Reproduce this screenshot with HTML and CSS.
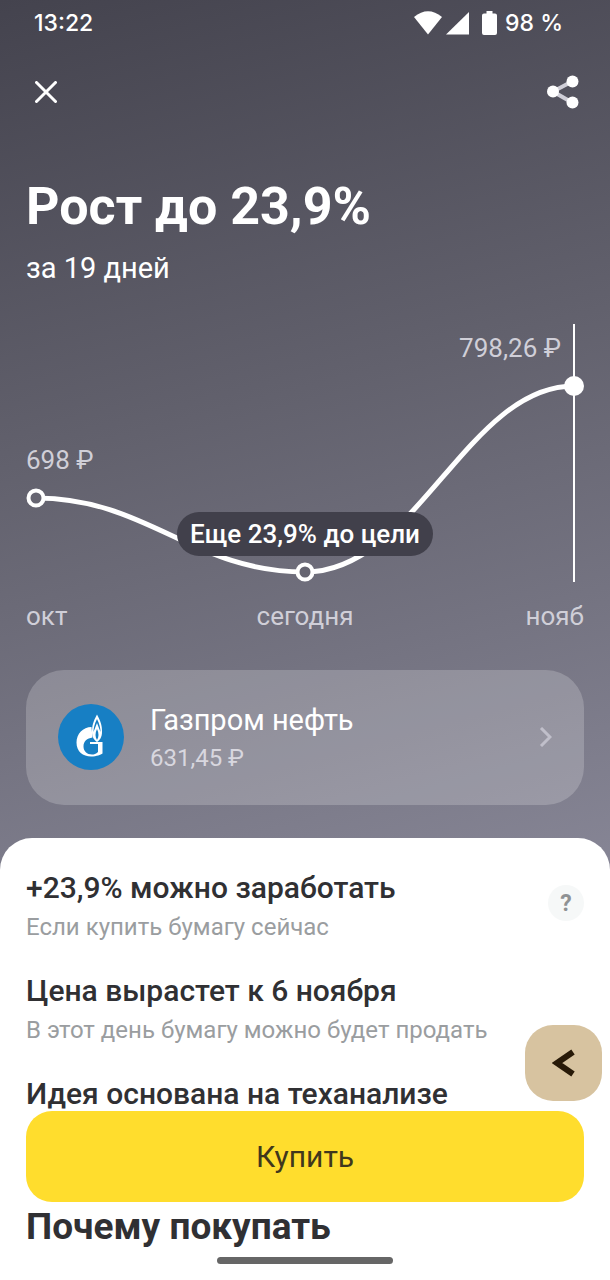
FILE: index.html
```html
<!DOCTYPE html>
<html lang="ru">
<head>
<meta charset="utf-8">
<meta name="viewport" content="width=device-width, initial-scale=1">
<title>Газпром нефть — рост до 23,9%</title>
<link rel="stylesheet" href="styles.css">
</head>
<body>
<main class="page">
  <section class="hero">
    <div class="status">
      <time class="status-time">13:22</time>
      <div class="status-right">
        <svg width="28" height="24" viewBox="0 0 28 24" fill="#fff" aria-hidden="true"><path d="M0 6Q14-5.500 28 6L14 23.500Z"/></svg>
        <svg width="24" height="24" viewBox="0 0 24 24" fill="#fff" aria-hidden="true"><path d="M0 23.500H23V1Z"/></svg>
        <svg class="battery" width="15" height="24" viewBox="0 0 15 24" fill="#fff" aria-hidden="true"><path d="M4.500 0h6v2.500H13q2 0 2 2V22q0 2-2 2H2q-2 0-2-2V4.500q0-2 2-2h2.500Z"/></svg>
        <span>98 %</span>
      </div>
    </div>

    <nav class="toolbar">
      <button class="icon-button" type="button" aria-label="Закрыть">
        <svg width="22" height="22" viewBox="0 0 22 22" fill="none" stroke="#fff" stroke-width="3" stroke-linecap="round" aria-hidden="true"><path d="M1.500 1.500l19 19M20.500 1.500l-19 19"/></svg>
      </button>
      <button class="icon-button" type="button" aria-label="Поделиться">
        <svg width="32" height="34" viewBox="0 0 32 34" fill="#fff" aria-hidden="true"><path d="M25 6.500L6 16.500l19 11" fill="none" stroke="#d0cfd8" stroke-width="4"/><circle cx="25.500" cy="6.500" r="6"/><circle cx="6" cy="16.500" r="6"/><circle cx="25.500" cy="27.500" r="6"/></svg>
      </button>
    </nav>

    <h1 class="title">Рост до 23,9%</h1>
    <p class="period">за 19 дней</p>

    <div class="chart">
      <svg class="plot" viewBox="0 0 558 258" role="img" aria-label="Прогноз цены">
        <path class="marker-line" d="M548 0V258"/>
        <path class="curve" d="M10 174C122 174 167 248 279 248C390 248 441 62 548 62"/>
        <circle class="point" cx="10" cy="174" r="7.500"/>
        <circle class="point" cx="279" cy="248" r="7.500"/>
        <circle class="point-end" cx="548" cy="62" r="10"/>
        <text class="price" x="0" y="145">698 ₽</text>
        <text class="price" x="535" y="33" text-anchor="end">798,26 ₽</text>
        <rect class="bubble" x="151" y="188" width="256" height="44" rx="22"/>
        <text class="bubble-text" x="279" y="219" text-anchor="middle">Еще 23,9% до цели</text>
      </svg>
      <div class="axis"><span>окт</span><span>сегодня</span><span>нояб</span></div>
    </div>

    <a class="stock" href="#stock">
      <svg class="logo" width="66" height="66" viewBox="0 0 66 66" aria-hidden="true">
        <circle cx="33" cy="33" r="33" fill="#177fc4"/>
        <path d="M33.500 23C25 23 18.500 30 18.500 38.500C18.500 47.500 25 52.500 33 52.500C39 52.500 42.500 50.500 44.500 49.500V38H32V40H40V48C38 50 36 50.500 34 50.500C29 50.500 25.500 47 25.500 42.500C25.500 37 29 34.500 34.500 33.500Z" fill="#fff"/>
        <path d="M39 10.500C35 18 34 22 34 28C34 33 36 36 39 38C42 36 44 33 44 28C44 22 43 18 39 10.500Z" fill="#fff"/>
        <path d="M39 15C36.500 20 35.500 24 35.500 28C36.500 25 38 22 39 19C40 22 41.500 25 42.500 28C42.500 24 41.500 20 39 15ZM39 25C37 29 37 33 39 36C41 33 41 29 39 25Z" fill="#177fc4"/>
      </svg>
      <span class="stock-text"><span class="stock-name">Газпром нефть</span><span class="stock-price">631,45 ₽</span></span>
      <svg width="13" height="20" viewBox="0 0 13 20" fill="none" stroke="#c0bfca" stroke-width="3" aria-hidden="true"><path d="M2 1l9 9-9 9"/></svg>
    </a>
  </section>

  <section class="sheet">
    <div class="fact">
      <div>
        <h2 class="fact-title">+23,9% можно заработать</h2>
        <p class="fact-note">Если купить бумагу сейчас</p>
      </div>
      <button class="help" type="button" aria-label="Подсказка">?</button>
    </div>
    <div class="fact">
      <div>
        <h2 class="fact-title">Цена вырастет к 6 ноября</h2>
        <p class="fact-note">В этот день бумагу можно будет продать</p>
      </div>
    </div>
    <div class="fact fact-last">
      <h2 class="fact-title">Идея основана на теханализе</h2>
    </div>
    <h2 class="reason">Почему покупать</h2>
  </section>
</main>

<button class="buy" type="button">Купить</button>
<button class="assist" type="button" aria-label="Открыть панель">
  <svg width="23" height="28" viewBox="0 0 23 28" fill="none" stroke="#281a08" stroke-width="6" aria-hidden="true"><path d="M21 3L5 14l16 11"/></svg>
</button>
<div class="home-bar"></div>
</body>
</html>
```
FILE: styles.css
```css
* {
  box-sizing: border-box;
}

body {
  margin: 0;
  background: #fff;
  color: #303033;
  font-family: Roboto, "Noto Sans", sans-serif;
}

h1,
h2,
p {
  margin: 0;
}

button {
  border: 0;
  padding: 0;
  font-family: inherit;
  cursor: pointer;
}

svg {
  display: block;
}

.hero {
  padding: 0 26px 75px;
  background: linear-gradient(165deg, #44434e 0%, #62616d 45%, #878696 100%);
  color: #fff;
}

.status {
  display: flex;
  align-items: center;
  justify-content: space-between;
  height: 46px;
  padding: 0 21px 0 8px;
  font-family: Inter, sans-serif;
  font-size: 23px;
  font-weight: 500;
}

.status-right {
  display: flex;
  align-items: center;
  gap: 4px;
}

.battery {
  margin: 0 4px 0 8px;
}

.toolbar {
  display: flex;
  align-items: center;
  justify-content: space-between;
  height: 92px;
  padding: 0 5px 0 9px;
}

.icon-button {
  background: none;
}

.title {
  margin-top: 39px;
  font-size: 52px;
  font-weight: 700;
  line-height: 60px;
}

.period {
  margin-top: 13px;
  font-size: 29px;
  line-height: 36px;
}

.chart {
  margin-top: 38px;
}

.plot {
  width: 100%;
  height: auto;
  overflow: visible;
}

.marker-line {
  stroke: #fff;
  stroke-width: 2;
}

.curve {
  fill: none;
  stroke: #fff;
  stroke-width: 5;
}

.point {
  fill: #666571;
  stroke: #fff;
  stroke-width: 4;
}

.point-end {
  fill: #fff;
}

.price {
  fill: #d0cfd8;
  font-size: 26px;
}

.bubble {
  fill: #41404b;
}

.bubble-text {
  fill: #fff;
  font-size: 26px;
  font-weight: 500;
}

.axis {
  display: flex;
  justify-content: space-between;
  margin-top: 18px;
  color: #d0cfd8;
  font-size: 26px;
  line-height: 32px;
}

.axis span {
  flex: 1;
  text-align: center;
}

.axis span:first-child {
  text-align: left;
}

.axis span:last-child {
  text-align: right;
}

.stock {
  display: flex;
  align-items: center;
  gap: 26px;
  margin-top: 38px;
  padding: 30px 32px 32px;
  border-radius: 38px;
  background: rgba(255, 255, 255, 0.2);
  color: #fff;
  text-decoration: none;
}

.stock-text {
  display: flex;
  flex: 1;
  flex-direction: column;
  gap: 3px;
}

.stock-name {
  font-size: 29px;
  line-height: 40px;
}

.stock-price {
  color: #d8d7df;
  font-size: 24px;
  line-height: 30px;
}

.sheet {
  margin-top: -42px;
  padding: 32px 26px 0;
  border-radius: 32px 32px 0 0;
  background: #fff;
}

.fact {
  display: flex;
  align-items: center;
  justify-content: space-between;
  margin-bottom: 29px;
}

.fact-title {
  font-size: 30px;
  font-weight: 500;
  line-height: 36px;
}

.fact-note {
  margin-top: 4px;
  color: #9a9da0;
  font-size: 24px;
  line-height: 34px;
}

.fact-last {
  margin-bottom: 92px;
}

.help {
  width: 36px;
  height: 36px;
  margin-top: -8px;
  border-radius: 50%;
  background: #f6f8f8;
  color: #8f9294;
  font-size: 23px;
  font-weight: 700;
}

.reason {
  font-size: 37px;
  font-weight: 700;
  line-height: 46px;
}

.buy {
  position: fixed;
  right: 26px;
  bottom: 78px;
  left: 26px;
  height: 91px;
  border-radius: 26px;
  background: #ffdd2d;
  color: #40371c;
  font-size: 30px;
}

.assist {
  position: fixed;
  right: 8px;
  bottom: 179px;
  display: flex;
  align-items: center;
  justify-content: center;
  width: 77px;
  height: 76px;
  border-radius: 28px;
  background: #d7c3a0;
}

.home-bar {
  position: fixed;
  bottom: 16px;
  left: 50%;
  width: 176px;
  height: 7px;
  border-radius: 4px;
  background: #666;
  transform: translateX(-50%);
}
```
